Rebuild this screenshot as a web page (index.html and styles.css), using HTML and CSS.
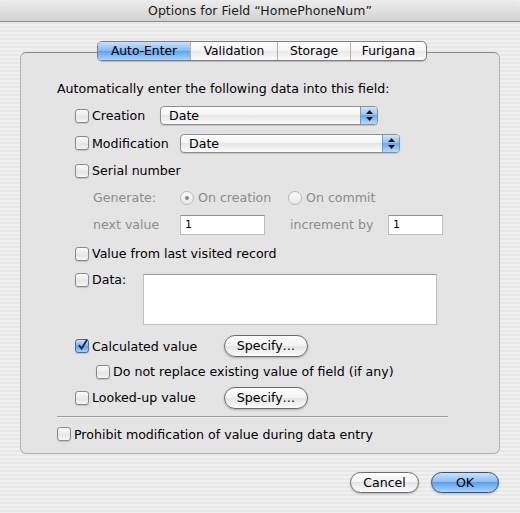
FILE: index.html
```html
<!DOCTYPE html>
<html lang="en">
<head>
  <meta charset="UTF-8">
  <title>Options for Field</title>
  <link rel="stylesheet" href="styles.css">
</head>
<body>
  <div class="window">
    <div class="titlebar">Options for Field “HomePhoneNum”</div>

    <div class="content">
      <div class="tabs">
        <span class="tab selected">Auto-Enter</span>
        <span class="tab">Validation</span>
        <span class="tab">Storage</span>
        <span class="tab">Furigana</span>
      </div>

      <div class="panel">
        <div class="row intro">Automatically enter the following data into this field:</div>

        <div class="row opt">
          <span class="check"></span>
          <span class="label w-creation">Creation</span>
          <span class="popup w-popup1">Date
            <span class="arrows"><svg width="7" height="11" viewBox="0 0 7 11"><path d="M3.5 0 L7 4 L0 4 Z M0 7 L7 7 L3.5 11 Z" fill="#111"/></svg></span>
          </span>
        </div>

        <div class="row opt tall">
          <span class="check"></span>
          <span class="label w-modif">Modification</span>
          <span class="popup w-popup2">Date
            <span class="arrows"><svg width="7" height="11" viewBox="0 0 7 11"><path d="M3.5 0 L7 4 L0 4 Z M0 7 L7 7 L3.5 11 Z" fill="#111"/></svg></span>
          </span>
        </div>

        <div class="row opt">
          <span class="check"></span>
          <span class="label">Serial number</span>
        </div>

        <div class="row sub disabled">
          <span class="sublabel">Generate:</span>
          <span class="radio on"></span>
          <span class="label w-radio">On creation</span>
          <span class="radio"></span>
          <span class="label">On commit</span>
        </div>

        <div class="row sub disabled">
          <span class="sublabel">next value</span>
          <span class="field w-field1">1</span>
          <span class="sublabel w-incr">increment by</span>
          <span class="field w-field2">1</span>
        </div>

        <div class="row opt gap-top">
          <span class="check"></span>
          <span class="label">Value from last visited record</span>
        </div>

        <div class="row opt data">
          <span class="check"></span>
          <span class="label w-data">Data:</span>
          <span class="textarea"></span>
        </div>

        <div class="row opt short">
          <span class="check checked"><svg width="12" height="12" viewBox="0 0 12 12"><path d="M2 6 L5 10 L11 0" fill="none" stroke="#1c2a4a" stroke-width="2"/></svg></span>
          <span class="label w-calc">Calculated value</span>
          <span class="button">Specify…</span>
        </div>

        <div class="row opt nested">
          <span class="check"></span>
          <span class="label">Do not replace existing value of field (if any)</span>
        </div>

        <div class="row opt">
          <span class="check"></span>
          <span class="label w-calc">Looked-up value</span>
          <span class="button">Specify…</span>
        </div>

        <div class="separator"></div>

        <div class="row outer">
          <span class="check"></span>
          <span class="label">Prohibit modification of value during data entry</span>
        </div>
      </div>

      <div class="actions">
        <span class="button cancel">Cancel</span>
        <span class="button default">OK</span>
      </div>
    </div>
  </div>
</body>
</html>
```

FILE: styles.css
```css
body {
  margin: 0;
  font-family: "DejaVu Sans", sans-serif;
  font-size: 12.6px;
  color: #000;
}
.window {
  width: 520px;
  height: 513px;
  overflow: hidden;
  background: repeating-linear-gradient(#f0f0f0 0 2px, #e8e8e8 2px 4px);
}
.titlebar {
  height: 21px;
  line-height: 22px;
  text-align: center;
  font-size: 12.5px;
  color: #1a1a1a;
  background: linear-gradient(#ededed, #d2d2d2);
  border-bottom: 1px solid #8f8f8f;
  border-radius: 6px 6px 0 0;
}
.content {
  padding-top: 19px;
  display: flex;
  flex-direction: column;
}
.tabs {
  align-self: flex-start;
  margin-left: 97px;
  margin-bottom: -9px;
  display: flex;
  height: 18px;
  border: 1px solid #7e7e7e;
  border-radius: 5px;
  overflow: hidden;
  background: linear-gradient(#ffffff, #f4f4f4 50%, #e9e9e9 50%, #fafafa);
  position: relative;
  z-index: 1;
  box-shadow: 0 1px 1px rgba(0, 0, 0, 0.2);
}
.tab {
  line-height: 18px;
  padding: 0 10px;
  border-left: 1px solid #b4b4b4;
  font-size: 12.3px;
}
.tab:first-child {
  border-left: none;
}
.tab.selected {
  width: 72px;
  text-align: center;
  background: linear-gradient(#c9e1fb, #84baf2 50%, #5d9fec 50%, #a9d5fd);
}
.tab:nth-child(2) { width: 66px; text-align: center; }
.tab:nth-child(3) { width: 52px; text-align: center; }
.tab:nth-child(4) { width: 55px; text-align: center; }
.panel {
  margin: 0 20px 0 20px;
  height: 378px;
  padding-top: 22px;
  background: #e4e4e4;
  border: 1px solid #b2b2b2;
  border-top-color: #8a8a8a;
  border-radius: 6px;
  display: flex;
  flex-direction: column;
}
.row {
  display: flex;
  align-items: center;
  height: 27px;
  padding-left: 36px;
}
.opt {
  padding-left: 54px;
}
.tall {
  height: 28px;
}
.short {
  height: 26px;
}
.sub {
  padding-left: 72px;
}
.nested {
  padding-left: 75px;
  height: 25px;
}
.outer {
  padding-left: 36px;
  height: 26px;
}
.gap-top {
  margin-top: 2px;
}
.data {
  height: 66px;
  align-items: flex-start;
}
.data .check {
  margin-top: 6px;
}
.data .label {
  line-height: 26px;
}
.disabled {
  color: #8c8c8c;
}
.check {
  box-sizing: border-box;
  width: 14px;
  height: 14px;
  border: 1px solid #8a8a8a;
  border-radius: 3px;
  background: linear-gradient(#fdfdfd, #e6e6e6 60%, #f6f6f6);
  box-shadow: 0 1px 1px rgba(0, 0, 0, 0.15);
  flex-shrink: 0;
  display: flex;
  align-items: flex-end;
  justify-content: center;
}
.check.checked {
  background: linear-gradient(#c9e0f8, #7fb2ea 50%, #5f9de6 50%, #a6d0fa);
  border-color: #4d6d99;
}
.check svg {
  margin-bottom: 1px;
  margin-left: 1px;
}
.label {
  margin-left: 3px;
}
.w-creation { width: 68px; }
.w-modif { width: 88px; }
.w-data { width: 51px; }
.w-calc { width: 132px; }
.radio + .label {
  margin-left: 4px;
}
.w-radio { width: 90px; }
.sublabel {
  width: 87px;
}
.w-incr {
  width: 98px;
  margin-left: 25px;
}
.popup {
  position: relative;
  box-sizing: border-box;
  height: 19px;
  line-height: 17px;
  padding-left: 8px;
  border: 1px solid #8e8e8e;
  border-radius: 4px;
  background: linear-gradient(#ffffff, #f3f3f3 50%, #e6e6e6 50%, #fbfbfb);
  box-shadow: 0 1px 1px rgba(0, 0, 0, 0.15);
}
.w-popup1 { width: 218px; }
.w-popup2 { width: 220px; }
.arrows {
  position: absolute;
  right: 0;
  top: 0;
  bottom: 0;
  width: 16px;
  border-left: 1px solid #7d97bb;
  border-radius: 0 3px 3px 0;
  background: linear-gradient(#d0e5fa, #8ec0f2 50%, #6ea9ec 50%, #b4dbfd);
  display: flex;
  align-items: center;
  justify-content: center;
}
.radio {
  box-sizing: border-box;
  width: 14px;
  height: 14px;
  border: 1px solid #b9b9b9;
  border-radius: 50%;
  background: linear-gradient(#fafafa, #e8e8e8);
  display: flex;
  align-items: center;
  justify-content: center;
}
.radio.on::after {
  content: "";
  width: 4px;
  height: 4px;
  border-radius: 50%;
  background: #8a8a8a;
}
.field {
  box-sizing: border-box;
  height: 20px;
  line-height: 18px;
  padding-left: 4px;
  font-size: 11px;
  color: #000;
  background: #fff;
  border: 1px solid #bdbdbd;
  border-top-color: #8e8e8e;
}
.w-field1 { width: 85px; }
.w-field2 { width: 55px; }
.textarea {
  box-sizing: border-box;
  width: 294px;
  height: 51px;
  margin-top: 7px;
  background: #fff;
  border: 1px solid #c0c0c0;
  border-top-color: #9a9a9a;
}
.button {
  box-sizing: border-box;
  width: 84px;
  height: 22px;
  line-height: 20px;
  text-align: center;
  border: 1px solid #6d6d6d;
  border-radius: 11px;
  background: linear-gradient(#ffffff, #f2f2f2 50%, #e3e3e3 50%, #fdfdfd);
  box-shadow: 0 1px 2px rgba(0, 0, 0, 0.25);
}
.separator {
  height: 1px;
  margin: 5px 51px 3px 36px;
  background: #9d9d9d;
  border-bottom: 1px solid #f2f2f2;
}
.actions {
  display: flex;
  justify-content: flex-end;
  gap: 12px;
  margin: 18px 21px 0 0;
}
.cancel {
  width: 69px;
  height: 21px;
}
.default {
  width: 68px;
  height: 21px;
  border-color: #2f5288;
  background: linear-gradient(#cbe2fa, #86bbf0 50%, #5c9ee9 50%, #a9d5fd);
}
```
